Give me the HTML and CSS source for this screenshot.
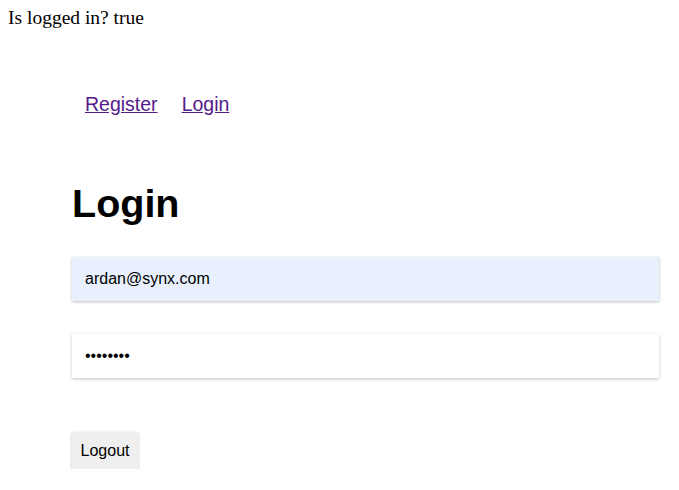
FILE: index.html
```html
<!DOCTYPE html>
<html>
<head>
<meta charset="utf-8">
<link rel="stylesheet" href="styles.css">
</head>
<body>
<div class="status">Is logged in? true</div>
<div class="container">
  <nav class="nav">
    <a href="#register" class="nav-link">Register</a>
    <a href="#login" class="nav-link">Login</a>
  </nav>
  <h1 class="title">Login</h1>
  <form class="form">
    <input class="field field-filled" type="email" value="ardan@synx.com">
    <input class="field" type="password" value="password">
    <button class="btn" type="button">Logout</button>
  </form>
</div>
</body>
</html>
```

FILE: styles.css
```css
body {
  margin: 8px;
  font-family: "Liberation Serif", serif;
  font-size: 16px;
  background: #fff;
}
.status {
  font-size: 19.5px;
  line-height: 19px;
}
.container {
  margin-left: 64px;
  width: 587px;
  font-family: "Liberation Sans", Arial, sans-serif;
}
.nav {
  display: flex;
  gap: 24px;
  padding-left: 13px;
  margin-top: 66px;
}
.nav-link {
  font-size: 19.5px;
  color: #551a8b;
}
.title {
  font-size: 39.5px;
  font-weight: bold;
  margin: 64px 0 31px;
  line-height: 46px;
}
.form {
  display: flex;
  flex-direction: column;
  align-items: flex-start;
}
.field {
  box-sizing: border-box;
  width: 100%;
  height: 44px;
  border: none;
  outline: none;
  padding: 0 13px;
  font-family: "Liberation Sans", Arial, sans-serif;
  font-size: 16px;
  color: #000;
  background: #fff;
  box-shadow: 0 1px 3px rgba(0,0,0,0.25);
  margin-bottom: 33px;
}
.field-filled {
  background: #e8f0fe;
}
.btn {
  margin: 21px 0 0;
  height: 37px;
  width: 66px;
  padding: 0;
  border: none;
  background: #efefef;
  font-family: "Liberation Sans", Arial, sans-serif;
  font-size: 16px;
  color: #000;
  box-shadow: 0 1px 3px rgba(0,0,0,0.25);
}
```
